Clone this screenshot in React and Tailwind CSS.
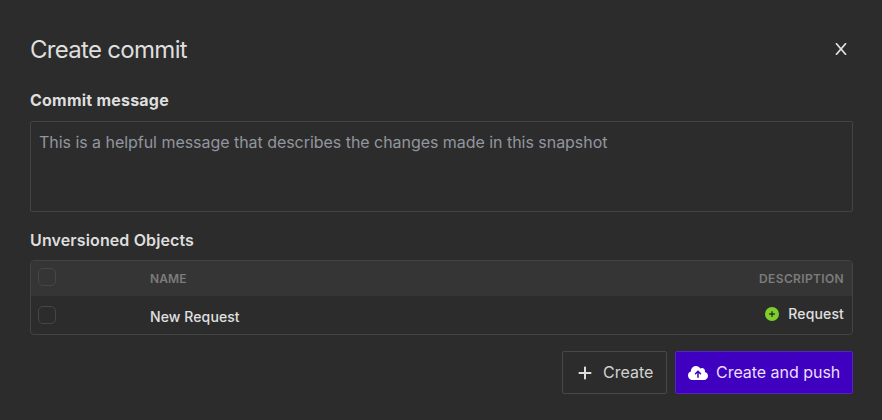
import { FaPlus, FaCloudArrowUp, FaCirclePlus } from "react-icons/fa6";

function Checkbox({ label, className = "" }) {
  return (
    <button
      type="button"
      role="checkbox"
      aria-checked="false"
      aria-label={label}
      className={`block size-[18px] rounded-[5px] border border-[#464646] ${className}`}
    />
  );
}

function ObjectsTable() {
  return (
    <div className="mt-[8px] overflow-hidden rounded-[4px] border border-[#434343]">
      <div className="flex h-[35px] items-center bg-[#353535] pr-[8px] pl-[7px] text-[12px] font-semibold text-[#7c7c7c]">
        <Checkbox label="Select all" className="mb-[3px]" />
        <span className="ml-[94px] flex-1 tracking-[0.1px]">NAME</span>
        <span className="tracking-[0.35px]">DESCRIPTION</span>
      </div>
      <div className="flex h-[38px] items-center pr-[8px] pl-[7px] text-[14px] font-medium text-[#e0e0e0]">
        <Checkbox label="Select New Request" />
        <span className="mt-[2px] ml-[94px] flex-1 tracking-[0.1px]">New Request</span>
        <span className="mb-[3px] flex items-center gap-[9px] tracking-[0.15px]">
          <FaCirclePlus className="size-[14px] text-[#7ecf2b]" />
          Request
        </span>
      </div>
    </div>
  );
}

export default function App() {
  return (
    <main className="flex h-[420px] w-[882px] flex-col bg-[#2c2c2c] pt-[33px] pr-[29px] pl-[30px] font-['Inter',sans-serif] text-[#dedede]">
      <header className="flex h-[32px] items-center justify-between">
        <h1 className="pt-[2px] text-[24px] leading-[32px] tracking-[-0.7px]">Create commit</h1>
        <button type="button" aria-label="Close" className="mr-[6px]">
          <svg viewBox="0 0 12 12" className="size-[12px]" fill="none" stroke="currentColor" strokeWidth="1.7">
            <path d="M1 .2 11 11.8M11 .2 1 11.8" />
          </svg>
        </button>
      </header>
      <label htmlFor="message" className="mt-[23px] block text-[16px] leading-[24px] font-bold tracking-[0.22px]">
        Commit message
      </label>
      <textarea
        id="message"
        placeholder="This is a helpful message that describes the changes made in this snapshot"
        className="mt-[9px] block h-[91px] w-full shrink-0 resize-none rounded-[2px] border border-[#434343] px-[8px] py-[8px] text-[16px] leading-[24px] tracking-[-0.04px] placeholder:text-[#92969f]"
      />
      <h2 className="mt-[16px] text-[16px] leading-[24px] font-semibold tracking-[0.12px]">Unversioned Objects</h2>
      <ObjectsTable />
      <footer className="mt-[16px] flex justify-end gap-[8px] text-[16px]">
        <button type="button" className="flex h-[43px] w-[105px] items-center rounded-[2px] border border-[#484848] pl-[14px]">
          <FaPlus className="size-[16px]" />
          <span className="mb-[1px] ml-[10px] text-[#d2d2d2]">Create</span>
        </button>
        <button
          type="button"
          className="flex h-[43px] w-[178px] items-center rounded-[2px] border border-[#5426bd] bg-[#4000bf] pl-[12px] text-[#eadfff]"
        >
          <FaCloudArrowUp className="size-[20px] text-white" />
          <span className="mb-[1px] ml-[8px] tracking-[-0.03px]">Create and push</span>
        </button>
      </footer>
    </main>
  );
}
